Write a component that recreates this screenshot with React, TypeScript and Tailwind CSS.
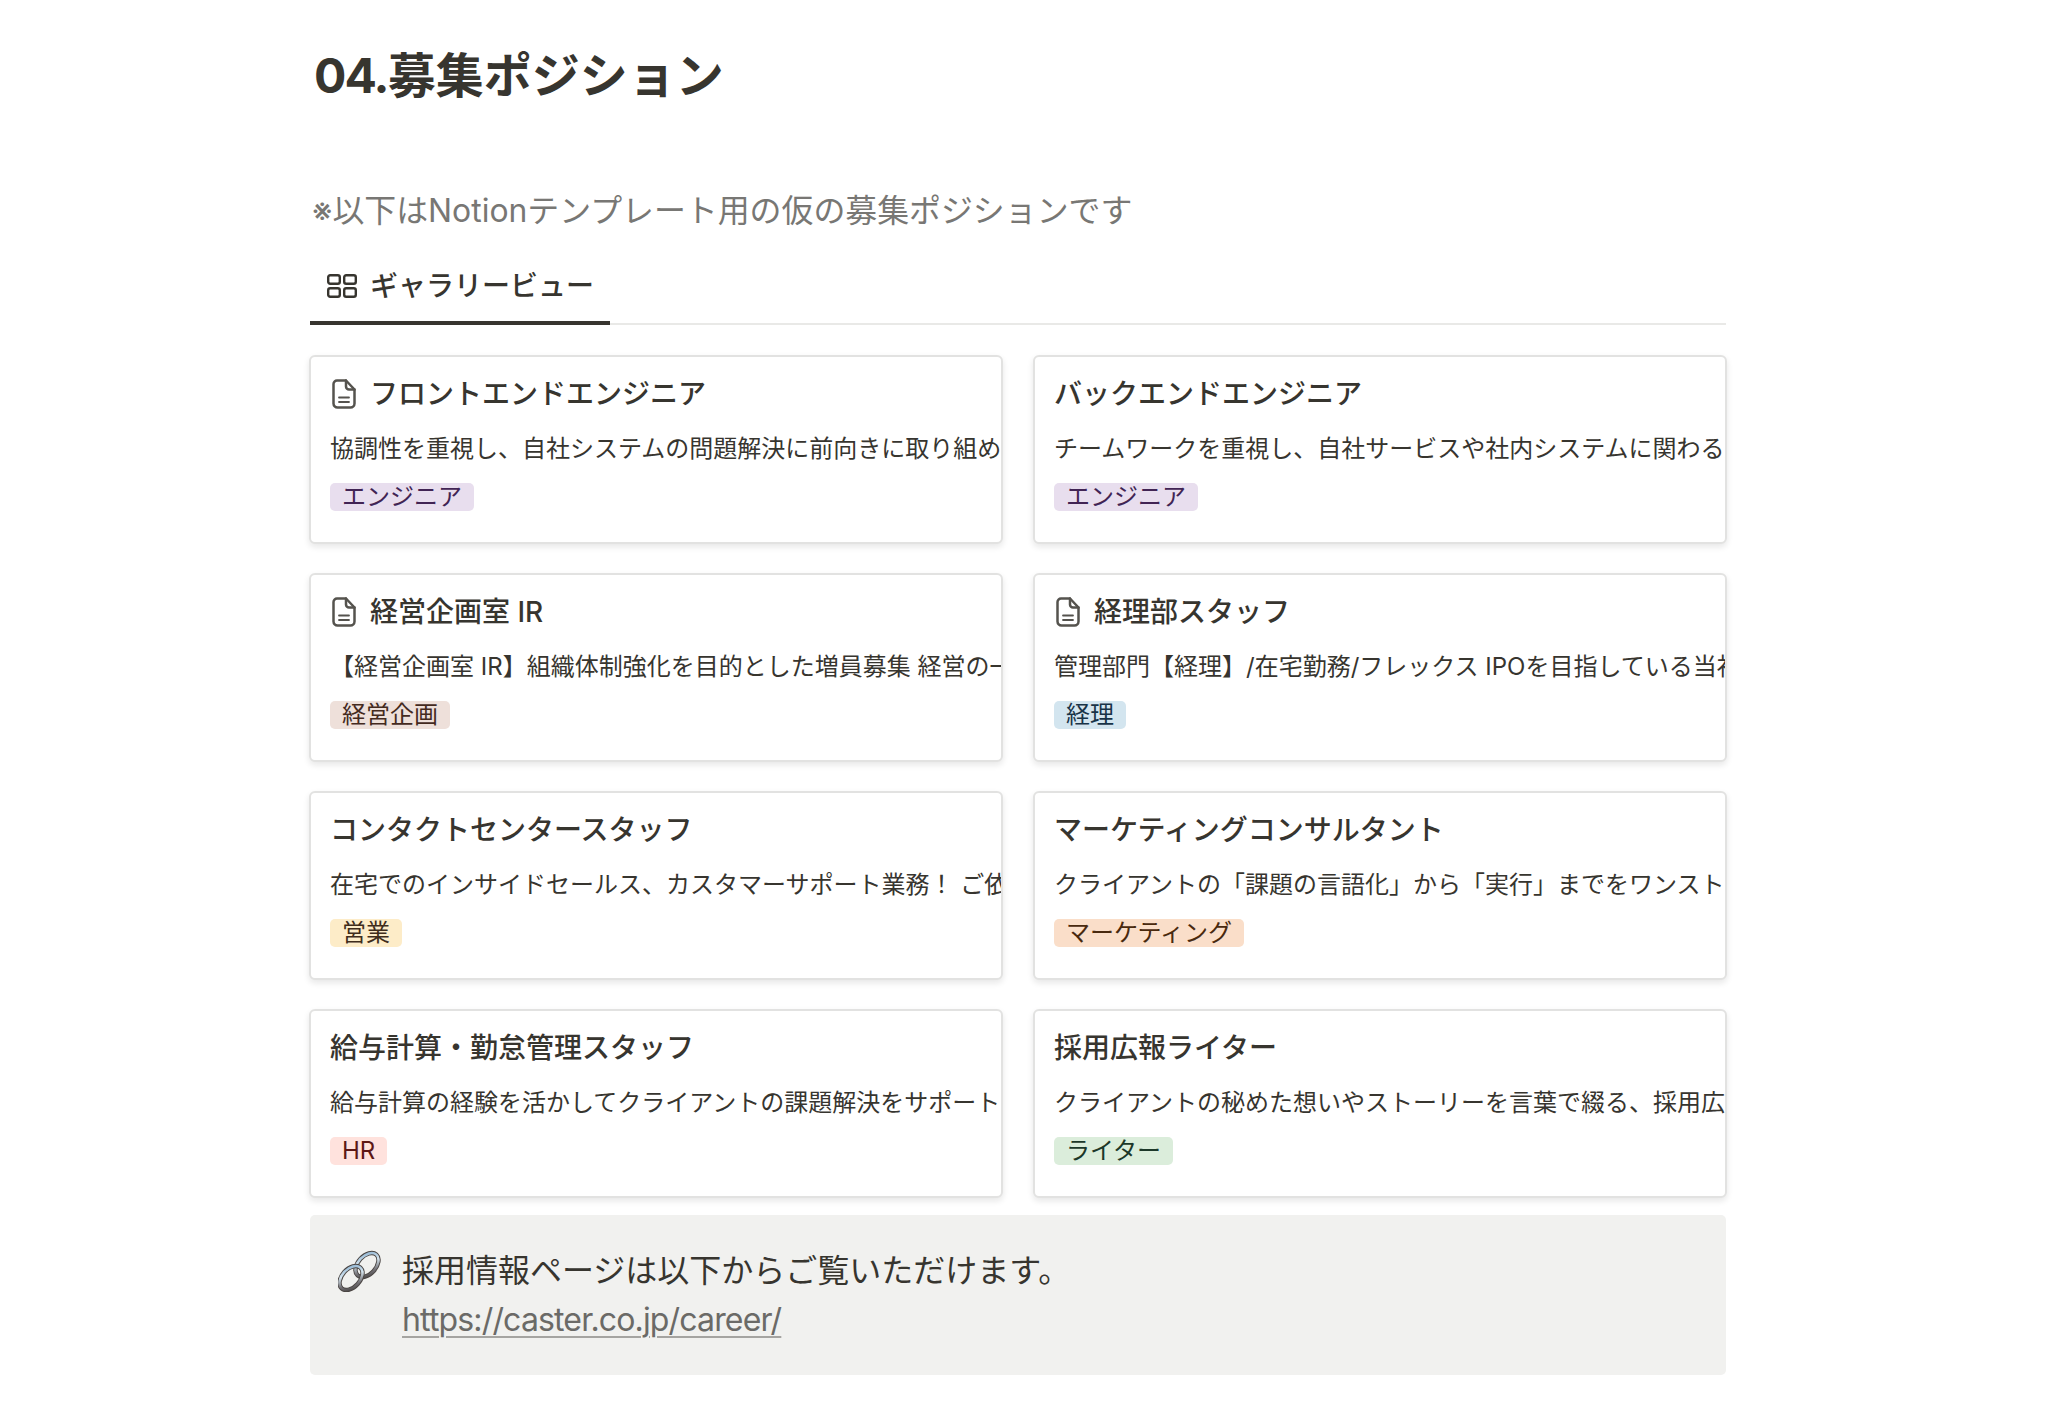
const positions = [
  {
    title: 'フロントエンドエンジニア',
    body: '協調性を重視し、自社システムの問題解決に前向きに取り組める方を募集しています。',
    tag: 'エンジニア',
    tagClass: 'bg-[#e8deee] text-[#412454]',
    icon: true,
  },
  {
    title: 'バックエンドエンジニア',
    body: 'チームワークを重視し、自社サービスや社内システムに関わる人を募集しています。',
    tag: 'エンジニア',
    tagClass: 'bg-[#e8deee] text-[#412454]',
    icon: false,
  },
  {
    title: '経営企画室 IR',
    body: '【経営企画室 IR】組織体制強化を目的とした増員募集 経営の一翼を担うポジションです。',
    tag: '経営企画',
    tagClass: 'bg-[#eee0da] text-[#442a1e]',
    icon: true,
  },
  {
    title: '経理部スタッフ',
    body: '管理部門【経理】/在宅勤務/フレックス IPOを目指している当社の経理業務をお任せします。',
    tag: '経理',
    tagClass: 'bg-[#d3e5ef] text-[#183347]',
    icon: true,
  },
  {
    title: 'コンタクトセンタースタッフ',
    body: '在宅でのインサイドセールス、カスタマーサポート業務！ ご依頼をお待ちしています。',
    tag: '営業',
    tagClass: 'bg-[#fdecc8] text-[#402c1b]',
    icon: false,
  },
  {
    title: 'マーケティングコンサルタント',
    body: 'クライアントの「課題の言語化」から「実行」までをワンストップで支援します。',
    tag: 'マーケティング',
    tagClass: 'bg-[#fadec9] text-[#49290e]',
    icon: false,
  },
  {
    title: '給与計算・勤怠管理スタッフ',
    body: '給与計算の経験を活かしてクライアントの課題解決をサポートしませんか。',
    tag: 'HR',
    tagClass: 'bg-[#ffe2dd] text-[#5d1715]',
    icon: false,
  },
  {
    title: '採用広報ライター',
    body: 'クライアントの秘めた想いやストーリーを言葉で綴る、採用広報のライターです。',
    tag: 'ライター',
    tagClass: 'bg-[#dbeddb] text-[#1c3829]',
    icon: false,
  },
];

function GalleryIcon() {
  return (
    <svg width="30" height="24" viewBox="0 0 30 24" fill="none" stroke="#37352f" strokeWidth="2.4">
      <rect x="1.2" y="1.2" width="11.6" height="8.6" rx="2" />
      <rect x="17.2" y="1.2" width="11.6" height="8.6" rx="2" />
      <rect x="1.2" y="14.2" width="11.6" height="8.6" rx="2" />
      <rect x="17.2" y="14.2" width="11.6" height="8.6" rx="2" />
    </svg>
  );
}

function FileIcon() {
  return (
    <svg className="ml-[2px]" width="24" height="30" viewBox="0 0 24 30" fill="none" stroke="#55534e" strokeWidth="2.5" strokeLinejoin="round" strokeLinecap="round">
      <path d="M5 1.500h9L22.500 10.500V24.500a4 4 0 0 1-4 4H5.500a4 4 0 0 1-4-4V5a3.500 3.500 0 0 1 3.500-3.500z" />
      <path d="M14 1.500V7.500a3 3 0 0 0 3 3H22.500" />
      <path d="M7 18.500h10M7 23h10" strokeWidth="1.8" />
    </svg>
  );
}

function ChainEmoji() {
  return (
    <svg width="44" height="42" viewBox="0 0 44 42" fill="none">
      <defs>
        <linearGradient id="chain" x1="0" y1="0" x2="1" y2="1">
          <stop offset="0" stopColor="#7fa9cb" />
          <stop offset="0.4" stopColor="#d5e4ee" />
          <stop offset="0.7" stopColor="#77757a" />
          <stop offset="1" stopColor="#3d3836" />
        </linearGradient>
      </defs>
      <ellipse cx="29" cy="15" rx="9" ry="14" transform="rotate(42 29 15)" stroke="#4a4543" strokeWidth="4.4" />
      <ellipse cx="29" cy="15" rx="9" ry="14" transform="rotate(42 29 15)" stroke="url(#chain)" strokeWidth="2.6" />
      <ellipse cx="13" cy="28" rx="9" ry="14" transform="rotate(42 13 28)" stroke="#4a4543" strokeWidth="4.4" />
      <ellipse cx="13" cy="28" rx="9" ry="14" transform="rotate(42 13 28)" stroke="url(#chain)" strokeWidth="2.6" />
    </svg>
  );
}

export default function App() {
  return (
    <div className="h-[1412px] w-[2046px] overflow-hidden bg-white pl-[310px] font-['Inter','Noto_Sans_CJK_JP',sans-serif] text-[#37352f]">
      <div className="w-[1416px]">
        <h1 className="pl-[4px] pt-[50px] text-[48px] leading-[52px] font-bold">
          <span className="tracking-[-1.800px]">04.</span>募集ポジション
        </h1>

        <p className="mt-[87px] pl-[2px] text-[31.900px] leading-[44px] text-[#787774]">
          ※以下はNotionテンプレート用の仮の募集ポジションです
        </p>

        <div className="mt-[32px] flex h-[60px] border-b-2 border-[#e9e9e7]">
          <div className="mb-[-2px] flex w-[300px] items-center gap-[13px] border-b-4 border-[#37352f] pb-[14px] pl-[17px]">
            <GalleryIcon />
            <span className="text-[28px] leading-[36px] font-medium">ギャラリービュー</span>
          </div>
        </div>

        <div className="mt-[30px] -ml-[1px] grid w-[1418px] grid-cols-2 gap-x-[30px] gap-y-[29px]">
          {positions.map((p) => (
            <div
              key={p.title}
              className="h-[189px] overflow-hidden rounded-[6px] border-2 border-[#e2e2e1] bg-white pt-[19px] pl-[19px] shadow-[0_3px_6px_rgba(15,15,15,0.1)]"
            >
              <div className="flex h-[36px] items-center gap-[14px]">
                {p.icon && <FileIcon />}
                <span className="text-[28px] leading-[36px] font-medium whitespace-nowrap">{p.title}</span>
              </div>
              <p className="mt-[21px] text-[24px] leading-[32px] whitespace-nowrap">{p.body}</p>
              <span className={`mt-[18px] inline-block h-[28px] rounded-[5px] px-[12px] text-[24px] leading-[28px] ${p.tagClass}`}>
                {p.tag}
              </span>
            </div>
          ))}
        </div>

        <div className="mt-[17px] flex h-[160px] items-start rounded-[5px] bg-[#f1f1ef] pt-[31px] pl-[28px]">
          <div className="mt-[4px] shrink-0">
            <ChainEmoji />
          </div>
          <div className="ml-[20px]">
            <p className="text-[32px] leading-[49px]">採用情報ページは以下からご覧いただけます。</p>
            <a className="text-[32px] leading-[49px] tracking-[-0.840px] text-[#6b6a67] underline decoration-[#a5a4a1] decoration-[1.500px] underline-offset-[5px]">
              https://caster.co.jp/career/
            </a>
          </div>
        </div>
      </div>
    </div>
  );
}
